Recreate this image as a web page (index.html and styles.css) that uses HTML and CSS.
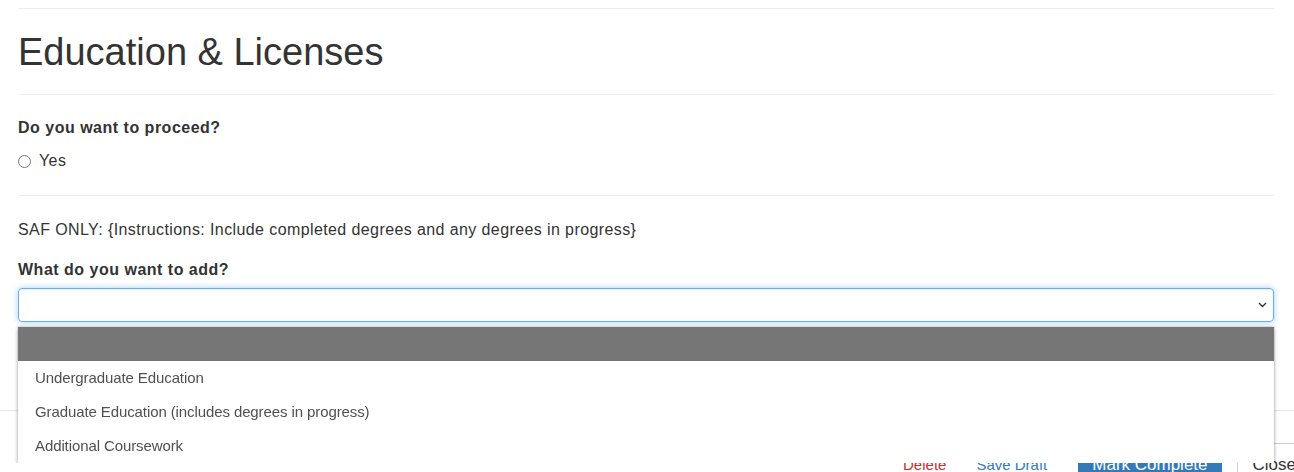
FILE: index.html
```html
<!DOCTYPE html>
<html lang="en">
<head>
    <meta charset="UTF-8">
    <meta name="viewport" content="width=device-width, initial-scale=1.0">
    <title>Education &amp; Licenses</title>
    <link rel="stylesheet" href="styles.css">
</head>
<body>
    <div class="page">
        <hr class="rule">
        <h1 class="title">Education &amp; Licenses</h1>
        <hr class="rule">

        <div class="question">
            <div class="q-label">Do you want to proceed?</div>
            <label class="radio">
                <span class="radio-dot"></span>
                <span>Yes</span>
            </label>
        </div>
        <hr class="rule">

        <p class="note">SAF ONLY: {Instructions: Include completed degrees and any degrees in progress}</p>
        <div class="q-label add">What do you want to add?</div>

        <div class="select">
            <svg class="chevron" width="9" height="6" viewBox="0 0 9 6">
                <path d="M1 1 L4.5 4.5 L8 1" fill="none" stroke="#333" stroke-width="1.4"/>
            </svg>
        </div>
        <div class="choice-list">
            <div class="choice picked">&nbsp;</div>
            <div class="choice">Undergraduate Education</div>
            <div class="choice">Graduate Education (includes degrees in progress)</div>
            <div class="choice">Additional Coursework</div>
        </div>
    </div>

    <div class="footer">
        <div class="footer-row">
            <a href="#" class="link delete">Delete</a>
            <a href="#" class="link save">Save Draft</a>
            <button class="button primary">Mark Complete</button>
            <div class="close-box">Close</div>
        </div>
    </div>
</body>
</html>
```

FILE: styles.css
```css
        body {
            margin: 0;
            font-family: "Liberation Sans", Arial, sans-serif;
            color: #333;
            background: #fff;
        }
        .page {
            padding: 8px 20px 0 18px;
        }
        .rule {
            margin: 0;
            border: none;
            border-top: 1px solid #eee;
            height: 0;
        }
        .title {
            font-size: 38px;
            font-weight: normal;
            line-height: 42px;
            margin: 22px 0 21px;
        }
        .question {
            padding: 23px 0 24px;
        }
        .q-label {
            font-size: 16px;
            font-weight: bold;
            line-height: 20px;
            letter-spacing: 0.5px;
        }
        .radio {
            display: flex;
            align-items: center;
            margin-top: 13px;
            font-size: 16px;
            line-height: 20px;
            letter-spacing: 0.4px;
        }
        .radio-dot {
            width: 11px;
            height: 11px;
            border: 1px solid #767676;
            border-radius: 50%;
            margin-right: 8px;
        }
        .note {
            margin: 24px 0 20px;
            font-size: 16px;
            line-height: 20px;
            letter-spacing: 0.4px;
        }
        .add {
            margin-bottom: 8px;
        }
        .select {
            height: 32px;
            border: 1px solid #66afe9;
            border-radius: 4px;
            box-shadow: inset 0 1px 1px rgba(0,0,0,.075), 0 0 6px rgba(102,175,233,.6);
            display: flex;
            align-items: center;
            justify-content: flex-end;
            padding-right: 6px;
        }
        /* open dropdown sits above the footer bar */
        .choice-list {
            position: relative;
            z-index: 20;
            margin-top: 5px;
            background: #fff;
            box-shadow: 0 1px 4px rgba(0,0,0,.35), 0 0 0 1px rgba(0,0,0,.06);
        }
        .choice {
            height: 34px;
            line-height: 34px;
            padding-left: 17px;
            font-size: 15px;
            letter-spacing: -0.1px;
            color: #505050;
        }
        .choice.picked {
            background: #767676;
        }
        .footer {
            position: fixed;
            left: 0;
            right: 0;
            bottom: 0;
            height: 61px;
            border-top: 1px solid #e5e5e5;
            background: #fff;
            overflow: hidden;
        }
        .footer-row {
            display: flex;
            justify-content: flex-end;
            align-items: baseline;
            padding-top: 32px;
            margin-right: -2px;
        }
        .link {
            font-size: 15px;
            line-height: 20px;
            text-decoration: none;
        }
        .delete {
            color: #c9302c;
            margin-right: 30px;
        }
        .save {
            color: #337ab7;
            margin-right: 31px;
        }
        .button {
            font-family: inherit;
            font-size: 17px;
            line-height: 20px;
            padding: 8px 14px;
            border: none;
            border-radius: 0;
            cursor: pointer;
        }
        .primary {
            background-color: #337ab7;
            color: white;
            margin-right: 15px;
        }
        .close-box {
            font-size: 17px;
            line-height: 20px;
            border-top: 1px solid #ccc;
            border-left: 1px solid #ccc;
            padding: 11px 0 20px 15px;
        }
```
